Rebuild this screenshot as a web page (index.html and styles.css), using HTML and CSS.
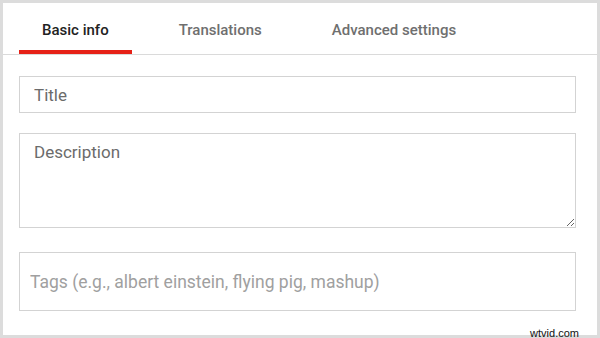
FILE: index.html
```html
<!DOCTYPE html>
<html lang="en">
<head>
    <meta charset="UTF-8">
    <meta name="viewport" content="width=device-width, initial-scale=1.0">
    <title>Video details</title>
    <link rel="stylesheet" href="styles.css">
</head>
<body>
    <div class="frame">
        <nav class="tabs">
            <div class="tab active">Basic info</div>
            <div class="tab">Translations</div>
            <div class="tab">Advanced settings</div>
        </nav>

        <form class="details">
            <input class="field field-title" type="text" placeholder="Title">
            <textarea class="field field-desc" placeholder="Description"></textarea>
            <input class="field field-tags" type="text" placeholder="Tags (e.g., albert einstein, flying pig, mashup)">
        </form>

        <div class="watermark">wtvid.com</div>
    </div>
</body>
</html>
```

FILE: styles.css
```css
* {
    margin: 0;
    padding: 0;
    box-sizing: border-box;
    font-family: Roboto, 'Liberation Sans', Arial, sans-serif;
}

body {
    background: #dcdcdc;
    width: 600px;
    height: 338px;
    padding: 3px;
    overflow: hidden;
}

.frame {
    background: white;
    height: 332px;
    position: relative;
}

.tabs {
    display: flex;
    gap: 24px;
    padding-left: 16px;
    border-bottom: 1px solid #dadada;
}

.tab {
    padding: 8px 23px 0;
    line-height: 39px;
    font-size: 15px;
    font-weight: 500;
    color: #6f6f6f;
    border-bottom: 4px solid transparent;
}

.tab.active {
    color: #222;
    border-bottom-color: #e62117;
}

.details {
    display: flex;
    flex-direction: column;
    gap: 20px;
    padding: 21px 21px 0 16px;
}

.field {
    display: block;
    width: 100%;
    border: 1px solid #d3d3d3;
    font-size: 17px;
    color: #333;
    background: white;
    outline: none;
}

.field-title {
    height: 37px;
    padding: 0 14px;
}

.field-title::placeholder,
.field-desc::placeholder {
    color: #6b6b6b;
}

.field-desc {
    height: 95px;
    padding: 8px 14px;
    line-height: 21px;
    resize: vertical;
}

.field-tags {
    height: 59px;
    margin-top: 4px;
    padding: 0 10px;
    font-size: 17.5px;
}

.field-tags::placeholder {
    color: #a0a0a0;
}

.watermark {
    position: absolute;
    right: 18px;
    bottom: -4px;
    font-family: 'Liberation Sans', Arial, sans-serif;
    font-size: 11px;
    color: #111;
}
```
